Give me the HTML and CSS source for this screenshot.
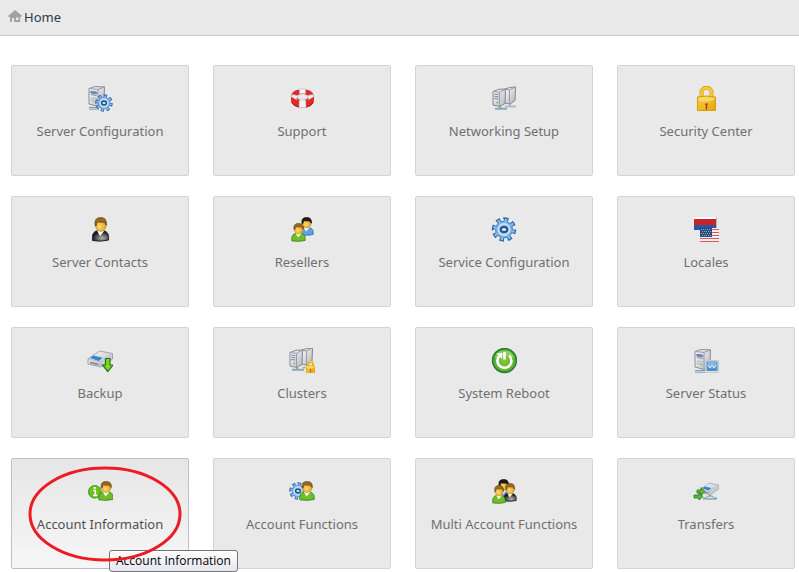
FILE: index.html
```html
<!DOCTYPE html>
<html lang="en">
<head>
<meta charset="utf-8">
<meta name="viewport" content="width=device-width, initial-scale=1">
<title>Home</title>
<link rel="stylesheet" href="styles.css">
</head>
<body>
<svg class="defs" aria-hidden="true">
  <defs>
    <linearGradient id="metal" x1="0" x2="1" y1="0" y2="1"><stop offset="0" stop-color="#fdfdfe"/><stop offset="1" stop-color="#b3b5bf"/></linearGradient>
    <linearGradient id="gold" x1="0" x2="1" y1="0" y2="1"><stop offset="0" stop-color="#fbd040"/><stop offset="1" stop-color="#e4a50e"/></linearGradient>
    <linearGradient id="screen" x1="0" x2="0" y1="0" y2="1"><stop offset="0" stop-color="#9cc9f0"/><stop offset="1" stop-color="#3f86cb"/></linearGradient>
    <radialGradient id="skin" cx=".4" cy=".6"><stop offset="0" stop-color="#ffdc6b"/><stop offset="1" stop-color="#e5a62a"/></radialGradient>
    <radialGradient id="black-suit" cx=".6" cy=".7" r=".6"><stop offset="0" stop-color="#b4b4b8"/><stop offset="1" stop-color="#17171a"/></radialGradient>
    <radialGradient id="green-ball"><stop offset="0" stop-color="#86c83c"/><stop offset="1" stop-color="#55ad2f"/></radialGradient>
    <symbol id="gear" viewBox="0 0 26 26">
      <circle cx="13" cy="13" r="10.2" fill="none" stroke="#2f6cae" stroke-width="5" pathLength="16" stroke-dasharray="1.1 .9"/>
      <circle cx="13" cy="13" r="8.8" fill="#7fb2e3" stroke="#3b7bbd"/>
      <circle cx="13" cy="13" r="9.6" fill="none" stroke="#8fbfeb" stroke-width="3.4" pathLength="16" stroke-dasharray=".6 1.4" stroke-dashoffset="-.25"/>
      <circle cx="13" cy="13" r="5.800" fill="none" stroke="#c6e0f7" stroke-width="2"/>
      <ellipse cx="13" cy="13" rx="3.400" ry="2.600" fill="#e9e9e9" stroke="#1d518f" stroke-width="2"/>
    </symbol>
    <symbol id="tower" viewBox="0 0 18 24">
      <path d="M1 21.500h10M1 23.200h10" stroke="#7e9db4"/>
      <path d="M1 2.500 7 .6 16.500.9 16 16 10 20.500 1 18z" fill="url(#metal)" stroke="#8b8c95"/>
      <path d="M1 2.500 10 3.400 16.500.9M10 3.400v17" fill="none" stroke="#9a9ba3"/>
      <path d="M2.800 5.200 8.500 6v2L2.800 7zM2.800 8.500 8.500 9.500" fill="#7188b4" stroke="#667ba8" stroke-width=".8"/>
      <path d="M2.800 12 8.500 13M2.800 14.200 6 15" stroke="#aeb0b8"/>
      <circle cx="7.400" cy="15.600" r="1" fill="#69cf28"/>
    </symbol>
    <symbol id="pair" viewBox="0 0 26 26">
      <path d="M14 20.500h11M19 18v2" stroke="#a9bfc8" stroke-width="2"/>
      <path d="M13 3.500 18.500 1.500 24.500 1 24 14.500 19 18 13 17z" fill="url(#metal)" stroke="#85868f"/>
      <path d="m13 3.500 5.500.3L24.500 1M18.500 3.800V18" fill="none" stroke="#9a9ba3"/>
      <path d="M4 22.800h12M9 19v3.500" stroke="#8ba6b1" stroke-width="2"/>
      <path d="M2 5.500 8 3.300 14.500 3 14 17.500 9 20.500 2 19z" fill="url(#metal)" stroke="#85868f"/>
      <path d="m2 5.500 6.500.8 6-3.300M8.500 6.300v14" fill="none" stroke="#9a9ba3"/>
      <path d="m3.300 8 4 .6m-4 1.600 4 .6m-4 1.600 4 .6" stroke="#7286b3"/>
      <circle cx="6.300" cy="16.500" r="1" fill="#69cf28"/>
    </symbol>
    <symbol id="lock" viewBox="0 0 20 26">
      <path d="M5 12V6.500c0-6.300 10-6.300 10 0V12" fill="none" stroke="#d89c12" stroke-width="4"/>
      <path d="M5 12V6.500c0-6 10-6 10 0V12" fill="none" stroke="#f6cc31" stroke-width="2.600"/>
      <path d="M1 11q9-2 18 0v13.500H1z" fill="url(#gold)" stroke="#d89c12"/>
      <path d="M2 12q8-2 16 0v2q-8 3-16 1z" fill="#fae27c" opacity=".7"/>
      <path d="M8.500 17.500h3l-.8 2v4H9.300v-4z" fill="#a6321b"/>
    </symbol>
    <symbol id="bust" viewBox="0 0 18 26" preserveAspectRatio="none">
      <path d="M1 24.500C.4 18 2 15 6 14.300h6c4 .7 5.600 4 5 9.700q-8 2-16 .5z" fill="var(--suit)" stroke="var(--edge)"/>
      <path d="m5.500 14 3 6 4.500-6z" fill="#fff"/>
      <ellipse cx="9.300" cy="8.500" rx="5.300" ry="6.500" fill="url(#skin)" stroke="#c98d25" stroke-width=".8"/>
      <path d="M3.600 9Q2.500 1.500 7.500.8q8-1.500 7.600 7.700Q13.500 8 13.200 5.500L6 5.200Q5 6 4.800 9z" fill="var(--hair)" stroke="var(--hair-edge)" stroke-width=".7"/>
    </symbol>
    <symbol id="drive" viewBox="0 0 26 18">
      <path d="M1 9 12.500 1l13 2.500V9L14 17 1 14z" fill="url(#metal)" stroke="#9fa3ac"/>
      <path d="m1 9 12.500 3 12-8.500M13.500 12v5" fill="none" stroke="#b8bbc3"/>
      <path d="m3 8 3.500-2.500 9 2.300L12 11z" fill="#2f86d5"/>
      <path d="m3 11.500 8.500 2v2L3 13.500z" fill="#8b8e96"/>
    </symbol>
  </defs>
</svg>

<header class="topbar">
  <nav aria-label="Breadcrumb">
    <a class="crumb" href="#">
      <svg class="home-icon" viewBox="0 0 14 12" aria-hidden="true"><path d="M7 0 14 5.800 13 7h-.8v5H6V8H4v4H2V7H1L0 6z" fill="#a0a2a4"/><path d="M8 7.500h2.500V10H8z" fill="#e9e9e9"/></svg>
      <span>Home</span>
    </a>
  </nav>
</header>

<main class="grid">
  <a class="card" href="#">
    <svg class="icon" viewBox="0 0 26 26" aria-hidden="true"><use href="#tower" x="1" y="0" width="18" height="24"/><use href="#gear" x="8" y="8" width="18" height="18"/></svg>
    <span>Server Configuration</span>
  </a>
  <a class="card" href="#">
    <svg class="icon" viewBox="0 0 26 26" aria-hidden="true">
      <path fill-rule="evenodd" d="M2 11C2 6 7 3.300 13.500 3.300S25 6 25 11v3c0 4.500-5 7.500-11.500 7.500S2 18.500 2 14zM8 11c0 4 11 4 11 0s-11-4-11 0z" fill="#e22828"/>
      <path d="M10.500 3h6v4.700q-3-.5-6 0zM10.300 13.800q3.200.6 6.400 0l.3 7.700h-7z" fill="#f5f5f5" stroke="#b9bcc1" stroke-width=".6"/>
      <path d="M2 10.500l1.500-2L9 9.800 7.500 12 8 14zM25 10.500l-1.500-2L18 9.800l1.500 2.200-.5 2z" fill="#f5f5f5" stroke="#b9bcc1" stroke-width=".6"/>
      <path d="M2.500 16q2 4.500 7.500 5.200M17 21.200q5.500-.7 7.500-5.200" fill="none" stroke="#b71414"/>
    </svg>
    <span>Support</span>
  </a>
  <a class="card" href="#">
    <svg class="icon" viewBox="0 0 26 26" aria-hidden="true"><use href="#pair" width="26" height="26"/></svg>
    <span>Networking Setup</span>
  </a>
  <a class="card" href="#">
    <svg class="icon" viewBox="0 0 26 26" aria-hidden="true"><use href="#lock" x="3.500" width="20" height="26"/></svg>
    <span>Security Center</span>
  </a>

  <a class="card" href="#">
    <svg class="icon" viewBox="0 0 26 26" aria-hidden="true"><use class="black" href="#bust" x="4.500" y="0" width="18" height="25"/></svg>
    <span>Server Contacts</span>
  </a>
  <a class="card" href="#">
    <svg class="icon" viewBox="0 0 26 26" aria-hidden="true"><use class="blue" href="#bust" x="10" y="0" width="15" height="19"/><use class="green" href="#bust" x="2" y="6" width="15" height="19"/></svg>
    <span>Resellers</span>
  </a>
  <a class="card" href="#">
    <svg class="icon" viewBox="0 0 26 26" aria-hidden="true"><use href="#gear" width="26" height="25"/></svg>
    <span>Service Configuration</span>
  </a>
  <a class="card" href="#">
    <svg class="icon" viewBox="0 0 26 26" aria-hidden="true">
      <path d="M1 0h22v2H1z" fill="#fff"/><path d="M1 2h22v6H1z" fill="#c9232a"/><path d="M1 8h22v5H1z" fill="#2456a5"/><path d="M23.500 0v11" stroke="#b8b8bc"/>
      <path d="M7 11h19v14H7z" fill="#f7eeee"/>
      <path d="M7 12.500h19M7 15.500h19M7 18.500h19M7 21.500h19M7 24.500h19" stroke="#d9555e"/>
      <path d="M7 11h12v9H7z" fill="#26487f"/>
      <path d="M8 12.500h10M9 14.500h10M8 16.500h10M9 18.500h10" stroke="#8fb4c0" stroke-dasharray="1 1"/>
    </svg>
    <span>Locales</span>
  </a>

  <a class="card" href="#">
    <svg class="icon" viewBox="0 0 26 26" aria-hidden="true"><use href="#drive" x="0" y="2" width="26" height="18"/><path d="M18.500 10.500h4.500v6.500h3l-5.200 6.500-5.300-6.500h3z" fill="#83d51b" stroke="#21751c" stroke-width="1.200"/></svg>
    <span>Backup</span>
  </a>
  <a class="card" href="#">
    <svg class="icon" viewBox="0 0 26 26" aria-hidden="true"><use href="#pair" x="-1" y="-1" width="26" height="26"/><use href="#lock" x="16.500" y="12.500" width="10" height="13"/></svg>
    <span>Clusters</span>
  </a>
  <a class="card" href="#">
    <svg class="icon" viewBox="0 0 26 26" aria-hidden="true">
      <circle cx="13.500" cy="12.500" r="11.900" fill="url(#green-ball)" stroke="#2c7d35" stroke-width="1.600"/>
      <path d="M4 10Q5 3 13 2.500T23 10q-9-4-19 0z" fill="#a4d874" opacity=".7"/>
      <path d="M9.300 7.200a7 7 0 1 0 8.800.4" fill="none" stroke="#fff" stroke-width="2.600"/>
      <path d="m5.500 5.500 6-.5-.5 6z" fill="#fff"/><path d="M13.500 4v7.500" stroke="#fff" stroke-width="2.600"/>
    </svg>
    <span>System Reboot</span>
  </a>
  <a class="card" href="#">
    <svg class="icon" viewBox="0 0 26 26" aria-hidden="true"><use href="#tower" x="1" y="1" width="18" height="24"/><path d="M12.500 12.500h13v12h-13z" fill="#dfe3e8" stroke="#c3c8ce"/><path d="M14 14h10v8.500H14z" fill="url(#screen)" stroke="#4f8dc6"/><path d="m15 17 2 3 2-3 2 3 2-3" fill="none" stroke="#e7f3fe"/></svg>
    <span>Server Status</span>
  </a>

  <a class="card card-active" href="#" aria-describedby="tip">
    <svg class="icon" viewBox="0 0 26 26" aria-hidden="true"><circle cx="7.800" cy="12.800" r="6.300" fill="#6cc11c" stroke="#3d9420"/><path d="M6.300 11.500h2v5M6 16.500h4.500" fill="none" stroke="#fff" stroke-width="1.600"/><circle cx="7.700" cy="8.900" r="1.100" fill="#fff"/><use class="green" href="#bust" x="11" y="2" width="16" height="20"/></svg>
    <span>Account Information</span>
    <span class="tooltip" id="tip" role="tooltip">Account Information</span>
    <svg class="marker" viewBox="0 0 154 96" aria-hidden="true"><ellipse cx="77" cy="48" rx="75" ry="46" fill="none" stroke="#ed1c24" stroke-width="3"/></svg>
  </a>
  <a class="card" href="#">
    <svg class="icon" viewBox="0 0 26 26" aria-hidden="true"><use href="#gear" x="0" y="3" width="18" height="18"/><use class="green" href="#bust" x="10" y="2" width="16" height="20"/></svg>
    <span>Account Functions</span>
  </a>
  <a class="card" href="#">
    <svg class="icon" viewBox="0 0 26 26" aria-hidden="true"><use class="blue" href="#bust" x="5" y="0" width="15" height="20"/><use class="black" href="#bust" x="12" y="4" width="14" height="19"/><use class="green" href="#bust" x="1" y="6" width="14" height="19"/></svg>
    <span>Multi Account Functions</span>
  </a>
  <a class="card" href="#">
    <svg class="icon" viewBox="0 0 26 26" aria-hidden="true"><path d="M10 19.500h14M17 15v4" stroke="#7fa1ae" stroke-width="2"/><ellipse cx="17" cy="18.500" rx="4" ry="1.500" fill="#d6e3e8" stroke="#7fa1ae"/><use href="#drive" x="7" y="3" width="19" height="14"/><path d="M4 11h4V8.500l4 4-4 4V14H4zM1 16h5v-2l4 3.500L6 21v-2H1z" fill="#5fb92c" stroke="#26751f" stroke-width=".8"/></svg>
    <span>Transfers</span>
  </a>
</main>
</body>
</html>
```
FILE: styles.css
```css
* {
  box-sizing: border-box;
}

body {
  margin: 0;
  background: #fff;
  font: 13px/16px "Noto Sans", "Open Sans", sans-serif;
}

a {
  color: inherit;
  text-decoration: none;
}

.defs {
  position: absolute;
  width: 0;
  height: 0;
}

.topbar {
  padding: 9px 8px 10px;
  background: #e9e9e9;
  border-bottom: 1px solid #ccc;
}

.crumb {
  display: flex;
  gap: 2px;
  color: #2f3b45;
}

.home-icon {
  width: 14px;
  height: 12px;
  margin-top: 1px;
}

.grid {
  display: grid;
  grid-template-columns: repeat(4, minmax(0, 1fr));
  gap: 20px 24px;
  padding: 29px 4px 3px 11px;
}

.card {
  position: relative;
  display: flex;
  flex-direction: column;
  align-items: center;
  gap: 11px;
  padding: 20px 4px 36px;
  background: #e9e9e9;
  border: 1px solid #d4d4d4;
  border-radius: 2px;
  color: #707070;
  text-align: center;
}

.card-active {
  background: linear-gradient(#e6e6e6, #f6f6f6);
  border-color: #bfbfc8;
  color: #505050;
}

.icon {
  width: 26px;
  height: 26px;
}

.black {
  --suit: url(#black-suit);
  --edge: #222;
  --hair: #96682b;
  --hair-edge: #624013;
}

.green {
  --suit: #72bd27;
  --edge: #2a811f;
  --hair: #96682b;
  --hair-edge: #624013;
}

.blue {
  --suit: #5ba1df;
  --edge: #2c72b6;
  --hair: #1d1d20;
  --hair-edge: #000;
}

.marker {
  position: absolute;
  top: 7px;
  left: 16px;
  z-index: 2;
  width: 154px;
  height: 96px;
  pointer-events: none;
}

.tooltip {
  position: absolute;
  top: 91px;
  left: 97px;
  z-index: 1;
  padding: 2px 6px;
  background: linear-gradient(#fff, #e5e5f0);
  border: 1px solid #767676;
  border-radius: 3px;
  color: #000;
  font-family: "Open Sans", "Noto Sans", sans-serif;
  font-size: 12px;
  white-space: nowrap;
}
```
